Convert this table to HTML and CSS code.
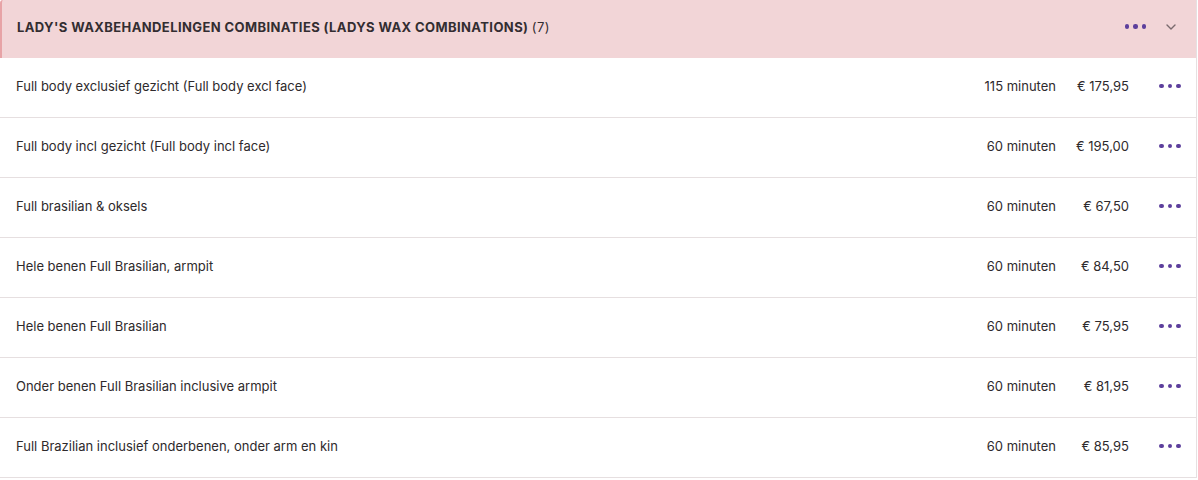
FILE: index.html
```html
<!DOCTYPE html>
<html>
<head>
<meta charset="utf-8">
<link rel="stylesheet" href="styles.css">
</head>
<body>
<section class="group">
  <header class="group-head">
    <h2 class="group-title">LADY'S WAXBEHANDELINGEN COMBINATIES (LADYS WAX COMBINATIONS) <span class="count">(7)</span></h2>
    <span class="dots"><i></i><i></i><i></i></span>
    <svg class="chev" width="10" height="6" viewBox="0 0 10 6"><path d="M1 1l4 4 4-4" fill="none" stroke="#7a6a6e" stroke-width="1.4" stroke-linecap="round" stroke-linejoin="round"/></svg>
  </header>
  <ul class="rows">
    <li class="row"><span class="name">Full body exclusief gezicht (Full body excl face)</span><span class="dur">115 minuten</span><span class="price">€ 175,95</span><span class="dots"><i></i><i></i><i></i></span></li>
    <li class="row"><span class="name">Full body incl gezicht (Full body incl face)</span><span class="dur">60 minuten</span><span class="price">€ 195,00</span><span class="dots"><i></i><i></i><i></i></span></li>
    <li class="row"><span class="name">Full brasilian &amp; oksels</span><span class="dur">60 minuten</span><span class="price">€ 67,50</span><span class="dots"><i></i><i></i><i></i></span></li>
    <li class="row"><span class="name">Hele benen Full Brasilian, armpit</span><span class="dur">60 minuten</span><span class="price">€ 84,50</span><span class="dots"><i></i><i></i><i></i></span></li>
    <li class="row"><span class="name">Hele benen Full Brasilian</span><span class="dur">60 minuten</span><span class="price">€ 75,95</span><span class="dots"><i></i><i></i><i></i></span></li>
    <li class="row"><span class="name">Onder benen Full Brasilian inclusive armpit</span><span class="dur">60 minuten</span><span class="price">€ 81,95</span><span class="dots"><i></i><i></i><i></i></span></li>
    <li class="row"><span class="name">Full Brazilian inclusief onderbenen, onder arm en kin</span><span class="dur">60 minuten</span><span class="price">€ 85,95</span><span class="dots"><i></i><i></i><i></i></span></li>
  </ul>
</section>
</body>
</html>
```
FILE: styles.css
```css
html, body {
  margin: 0;
  padding: 0;
  background: #ffffff;
}
body {
  font-family: Inter, "Liberation Sans", sans-serif;
  font-size: 13px;
  color: #2e2a2c;
}
.group {
  width: 1196px;
  border-right: 1px solid #e6e0e1;
}
.group-head {
  height: 58px;
  background: #f2d5d7;
  border-left: 2px solid #e7a3a6;
  display: flex;
  align-items: center;
  padding: 0 20px 5px 15px;
  box-sizing: border-box;
  border-radius: 3px 0 0 0;
}
.group-title {
  flex: 1;
  margin: 0;
  font-size: 13px;
  font-weight: 700;
  color: #332d31;
  letter-spacing: 0.4px;
}
.count {
  font-weight: 400;
}
.dots {
  display: flex;
  gap: 4px;
  align-items: center;
}
.dots i {
  width: 4.5px;
  height: 4.5px;
  border-radius: 50%;
  background: #5d3f9c;
}
.group-head .dots {
  margin-right: 20px;
}
.chev {
  display: block;
}
.rows {
  list-style: none;
  margin: 0;
  padding: 0;
}
.row {
  height: 60px;
  border-bottom: 1px solid #e6dfe0;
  display: flex;
  align-items: center;
  padding-left: 16px;
  padding-bottom: 3px;
  box-sizing: border-box;
}
.name {
  flex: 1;
}
.dur {
  text-align: right;
}
.price {
  width: 73px;
  text-align: right;
}
.row .dots {
  width: 67px;
  justify-content: center;
  padding-left: 15px;
  box-sizing: border-box;
}
```
